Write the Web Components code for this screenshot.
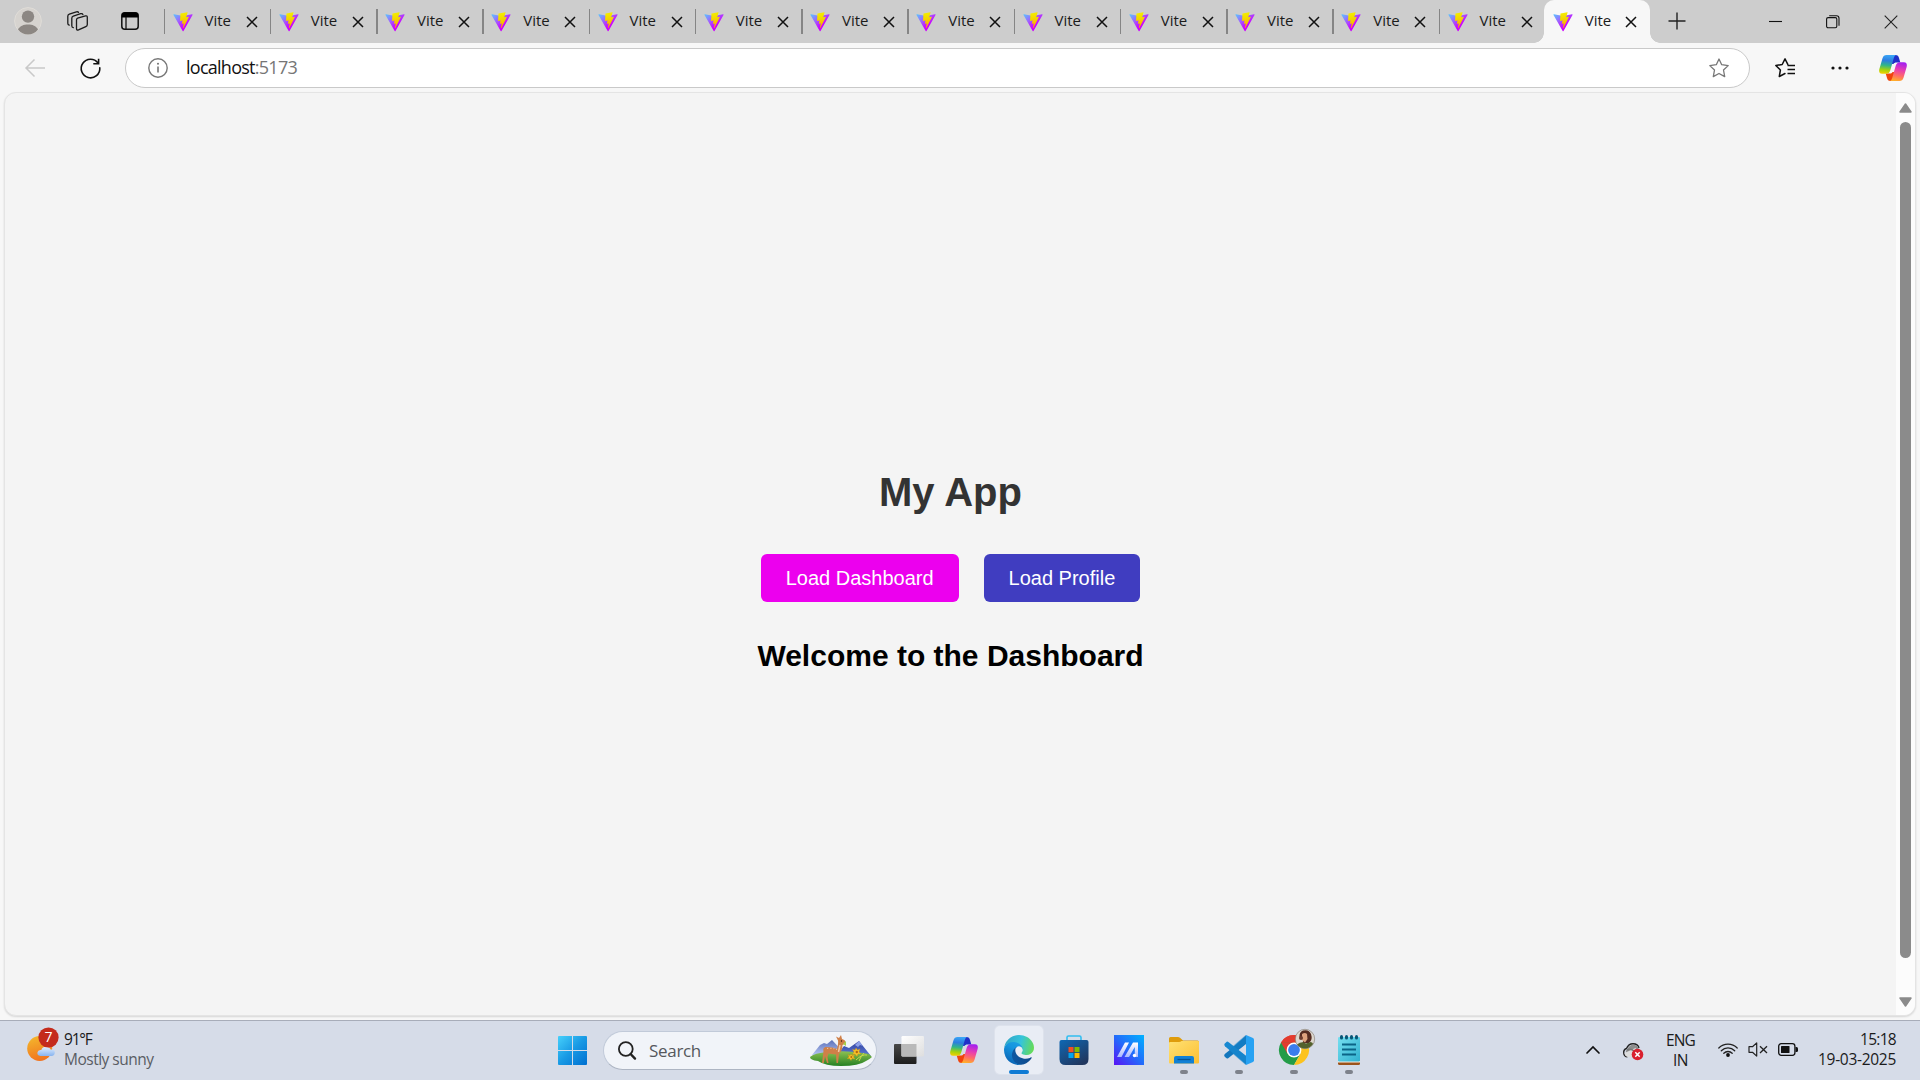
<!DOCTYPE html>
<html lang="en">
<head>
<meta charset="utf-8">
<title>Vite</title>
<style>
html,body{margin:0;width:1920px;height:1080px;overflow:hidden;background:#f7f7f7;font-family:"Open Sans","Noto Sans",sans-serif}
</style>
</head>
<body>
<desktop-screen></desktop-screen>
<script>
const ICONS={
person:[28,28,`<circle cx="14" cy="14" r="13.4" fill="#d6d3cf" stroke="#e0ddd8"/><circle cx="14" cy="9.6" r="6.2" fill="#8c8783"/><path d="M4 22.5C6 18.7 9.500 17.400 14 17.400S22 18.700 24 22.500C21.500 26 18 27.400 14 27.400S6.500 26 4 22.500Z" fill="#8c8783"/>`],
workspaces:[22,20,`<g fill="none" stroke="#1b1b1b" stroke-width="1.3" stroke-linejoin="round" stroke-linecap="round"><path d="M10.600 7.200 18.500 4.900Q20.300 4.500 20.300 6.200V13.400Q20.300 15 18.800 15.600L11.500 18.900Q9.500 19.500 9.500 17.500V9Q9.500 7.600 10.600 7.200Z"/><path d="M6.300 16.700Q4.800 16.500 4.800 14.800V7.300Q4.800 5.700 6.300 5.200L13.700 2.700Q15.500 2.300 15.900 3.600"/><path d="M2.200 14.200Q.800 13.800.800 12.300V5.200Q.800 3.700 2.300 3.200L9.400.900Q11 .500 11.500 1.400"/></g>`],
tabactions:[18,18,`<rect x=".8" y=".8" width="16.400" height="16.400" rx="3" fill="none" stroke="#111" stroke-width="1.500"/><path d="M.8 5.500V3Q.8.500 3 .5H15Q17.200.500 17.200 3V5.500Z" fill="#000"/><path d="M5 5V17" stroke="#111" stroke-width="1.300"/>`],
vite:[20,20,`<svg viewBox="0 0 410 404" width="20" height="20"><defs><linearGradient id="a" x1="6" y1="33" x2="225" y2="300" gradientUnits="userSpaceOnUse"><stop stop-color="#55ccff"/><stop offset=".55" stop-color="#a060ff"/><stop offset="1" stop-color="#cc00fe"/></linearGradient><linearGradient id="b" x1="194" y1="9" x2="236" y2="293" gradientUnits="userSpaceOnUse"><stop stop-color="#f4ee00"/><stop offset=".4" stop-color="#f3d900"/><stop offset="1" stop-color="#ffa800"/></linearGradient></defs><path d="M399.641 59.525 215.643 388.545C211.844 395.338 202.084 395.378 198.228 388.618L10.582 59.556C6.381 52.190 12.680 43.267 21.028 44.759L205.223 77.682C206.398 77.892 207.601 77.890 208.776 77.676L389.119 44.806C397.439 43.289 403.768 52.143 399.641 59.525Z" fill="url(#a)"/><path d="M292.965 1.574 156.801 28.255C154.563 28.694 152.906 30.590 152.771 32.866L144.395 174.330C144.198 177.662 147.258 180.248 150.510 179.498L188.420 170.749C191.967 169.931 195.172 173.055 194.443 176.622L183.180 231.775C182.422 235.487 185.907 238.661 189.532 237.560L212.947 230.446C216.577 229.344 220.065 232.527 219.297 236.242L201.398 322.875C200.278 328.294 207.486 331.249 210.492 326.603L212.500 323.500 323.454 102.072C325.312 98.365 322.108 94.137 318.036 94.923L279.014 102.454C275.347 103.161 272.227 99.746 273.262 96.158L298.731 7.867C299.767 4.273 296.636.855 292.965 1.574Z" fill="url(#b)"/></svg>`],
close:[12,12,`<path d="M1 1 11 11M11 1 1 11" stroke="#111" stroke-width="1.500"/>`],
plus:[18,18,`<path d="M9 .5V17.500M.5 9H17.500" stroke="#222" stroke-width="1.400"/>`],
min:[13,13,`<path d="M0 6.500H13" stroke="#111" stroke-width="1.100"/>`],
max:[14,14,`<rect x=".6" y="2.600" width="10.200" height="10.200" rx="1.500" fill="none" stroke="#111" stroke-width="1.100"/><path d="M3.200.700H10.500Q13 .700 13 3.200V10.700" fill="none" stroke="#111" stroke-width="1.100"/>`],
winclose:[14,14,`<path d="M.7.700 13.300 13.300M13.300.700.700 13.300" stroke="#222" stroke-width="1.100"/>`],
back:[20,18,`<path d="M20 9H1.200M9.500.500 1 9 9.500 17.500" fill="none" stroke="#c9c9c9" stroke-width="1.500"/>`],
reload:[21,21,`<path d="M18 5A9.300 9.300 0 1 0 19.800 9.800" fill="none" stroke="#111" stroke-width="1.600" stroke-linecap="round"/><path d="M18.600.700V5.800H13.300" fill="none" stroke="#111" stroke-width="1.600"/>`],
info:[20,20,`<circle cx="10" cy="10" r="9.200" fill="none" stroke="#777" stroke-width="1.400"/><path d="M10 8.500V14.500" stroke="#777" stroke-width="1.600"/><circle cx="10" cy="5.800" r="1.050" fill="#777"/>`],
star:[20,20,`<path d="M10 1 12.700 6.700 19.200 7.600 14.500 12 15.700 18.600 10 15.500 4.300 18.600 5.500 12 .8 7.600 7.300 6.700Z" fill="none" stroke="#777" stroke-width="1.300" stroke-linejoin="round"/>`],
favs:[20,20,`<path d="M12.800 6.400 10 .9 7.200 6.500.8 7.500 5.400 12 4.300 18.500 10 15.500" fill="none" stroke="#111" stroke-width="1.500" stroke-linejoin="round" stroke-linecap="round"/><path d="M12.500 7.600H20M12.500 11.500H20M12.500 15.400H20" stroke="#111" stroke-width="1.500"/>`],
dots:[18,4,`<g fill="#111"><circle cx="2" cy="2" r="1.600"/><circle cx="9" cy="2" r="1.600"/><circle cx="16" cy="2" r="1.600"/></g>`],
copilot:[28,26,`<defs><linearGradient id="l" x1=".5" y1="0" x2=".4" y2="1"><stop stop-color="#3aa6f6"/><stop offset=".3" stop-color="#2c7de0"/><stop offset=".55" stop-color="#2fb58a"/><stop offset=".8" stop-color="#a5d20c"/><stop offset="1" stop-color="#f0d000"/></linearGradient><linearGradient id="r" x1=".6" y1="0" x2=".4" y2="1"><stop stop-color="#a31ff0"/><stop offset=".4" stop-color="#e83fb0"/><stop offset=".7" stop-color="#ff6a6a"/><stop offset="1" stop-color="#ffae2a"/></linearGradient></defs><path d="M13 0H16.500C18.600 0 19.500 1.200 20 3L21.300 7.500H17.500C16 7.500 15 8 14.500 9L12 9Z" fill="#2030c8"/><path d="M15 26H11.500C9.400 26 8.500 24.800 8 23L6.700 18.500H10.500C12 18.500 13 18 13.500 17L16 17Z" fill="#f0440c"/><path d="M7.500 0H17.500C15.900.300 15.300 1.400 14.800 3L11.300 15.200C10.600 17.600 9.300 18.800 7 18.800H3.200C.6 18.800-.4 16.800.3 14.300L3.500 3.200C4.200 1 5.500 0 7.500 0Z" fill="url(#l)"/><path d="M20.500 26H10.500C12.100 25.700 12.700 24.600 13.200 23L16.700 10.800C17.400 8.400 18.700 7.200 21 7.200H24.800C27.400 7.200 28.400 9.200 27.700 11.700L24.500 22.800C23.800 25 22.500 26 20.500 26Z" fill="url(#r)"/>`],
up:[13,10,`<path d="M6.500 1 12 9H1Z" fill="#8b8b8b" stroke="#8b8b8b" stroke-width="1.500" stroke-linejoin="round"/>`],
down:[13,10,`<path d="M6.500 9 12 1H1Z" fill="#8b8b8b" stroke="#8b8b8b" stroke-width="1.500" stroke-linejoin="round"/>`],
weather:[32,35,`<defs><linearGradient id="s" x1=".3" y1="0" x2=".6" y2="1"><stop stop-color="#f3b62c"/><stop offset="1" stop-color="#f1711e"/></linearGradient><linearGradient id="c" x2="0" y2="1"><stop stop-color="#e2efff"/><stop offset="1" stop-color="#88b4ef"/></linearGradient></defs><circle cx="12.700" cy="21.500" r="12.500" fill="url(#s)"/><path d="M13.500 29Q10 28.500 10.400 25.500Q11 22.500 14.300 23Q15.500 19.500 19.500 19.800Q22.700 20 23.600 22.500Q27.700 22 27.800 25.700Q27.700 28.700 24.500 29Z" fill="url(#c)"/><circle cx="21.500" cy="10.500" r="10.100" fill="#c42b1c"/>`],
start:[29,29,`<defs><linearGradient id="w" x2="29" y2="29" gradientUnits="userSpaceOnUse"><stop stop-color="#46d0fb"/><stop offset=".5" stop-color="#1899e4"/><stop offset="1" stop-color="#006fd0"/></linearGradient></defs><path d="M1 0H14V14H0V1Q0 0 1 0ZM15 0H28Q29 0 29 1V14H15ZM0 15H14V29H1Q0 29 0 28ZM15 15H29V28Q29 29 28 29H15Z" fill="url(#w)"/>`],
search:[18,19,`<circle cx="7.800" cy="8" r="6.900" fill="none" stroke="#222" stroke-width="1.800"/><path d="M12.600 13 17 17.600" stroke="#222" stroke-width="2.400" stroke-linecap="round"/>`],
deer:[62,31,`<defs><linearGradient id="m" x2="0" y2="1"><stop stop-color="#5a6fb8"/><stop offset="1" stop-color="#b4c4f2"/></linearGradient><linearGradient id="n" x2="0" y2="1"><stop stop-color="#2f3f9a"/><stop offset="1" stop-color="#5d7ad8"/></linearGradient><linearGradient id="g" x2="0" y2="1"><stop stop-color="#8cc152"/><stop offset="1" stop-color="#258023"/></linearGradient></defs><path d="M2 20 10 10 14 8 17 9 22 5 36 20Z" fill="url(#m)"/><path d="M27 20 34 11 39 13 49 6 61 21Z" fill="url(#n)"/><path d="M45 10 49 6 53 11 50 10 48 12Z" fill="#8da0e8"/><path d="M0 22Q4 18 18 17Q40 15 59 19L62 22Q60 24 56 26Q49 31 31 31Q15 31 8 26Q0 25 0 22Z" fill="url(#g)"/><path d="M27 14Q28.500 8 28 5.500L26 1.500 29 3 31 0 32 4Q36 5 35.500 8Q33 10 32.500 10Q32.500 16 29 19L28 28H26.500L26 19.500Q21 19 18.500 18.500L17.500 22 18.500 28H17L15 21 13.800 28H12L13.500 16Q12.500 13 15.500 12Q23 12 27 14Z" fill="#cf8048"/><path d="M17 13.500Q23 13 27 14.500" stroke="#f3c195" stroke-width="1.200" stroke-dasharray="1 2" fill="none"/><path d="M30 10 28.500 17" stroke="#f0cba8" stroke-width="1.500"/><circle cx="31.500" cy="6" r=".7" fill="#311"/><path d="M33 9 36 6 36 11Z" fill="#a5cf4a"/><g fill="#f6c22b" stroke="#d08a10" stroke-width=".4"><path d="M46 13 47.500 15 50 14 49 17 51 19 48 19 47 21.500 45 19 42.500 19.500 44 17 42.500 14.500 45 15Z"/><path d="M41 19 42 20.500 44.500 20 43.500 22 45 24 42 23.500 41 25.500 39.500 23.500 37 23.500 39 22 38 19.500 40 20.500Z"/></g><circle cx="46.800" cy="17" r="1.200" fill="#b8690c"/><circle cx="41.300" cy="22" r="1" fill="#b8690c"/><path d="M46 25Q52 19 57 20M49 26Q51 21 54 18" stroke="#c8d94a" fill="none"/>`],
taskview:[30,28,`<defs><linearGradient id="k" x2="0" y2="1"><stop stop-color="#484848"/><stop offset="1" stop-color="#1d1d1d"/></linearGradient><linearGradient id="q" x2="1" y2="1"><stop stop-color="#fff"/><stop offset="1" stop-color="#dedede"/></linearGradient></defs><rect y="8" width="22.500" height="20" rx="1" fill="url(#k)"/><rect x="7.500" width="22.500" height="20.500" rx="1.200" fill="url(#q)"/><path d="M7.500 8H22.500V20.500H8.500Q7.500 20.500 7.500 19.500Z" fill="#b9b9b9"/>`],
edge:[30,30,`<svg viewBox="0 0 256 256" width="30" height="30"><defs><linearGradient id="e1" x1="58" y1="177" x2="236" y2="177" gradientUnits="userSpaceOnUse"><stop stop-color="#0c59a4"/><stop offset="1" stop-color="#114a8b"/></linearGradient><linearGradient id="e2" x1="130" y1="80" x2="50" y2="230" gradientUnits="userSpaceOnUse"><stop stop-color="#1b9de2"/><stop offset=".3" stop-color="#1595df"/><stop offset="1" stop-color="#0b68b8"/></linearGradient><linearGradient id="e3" x1="20" y1="60" x2="250" y2="120" gradientUnits="userSpaceOnUse"><stop stop-color="#31a8c8"/><stop offset=".5" stop-color="#35c4dc"/><stop offset="1" stop-color="#66dc55"/></linearGradient></defs><path fill="url(#e1)" d="M231 190.500c-3.400 1.800-6.900 3.400-10.500 4.700a101.500 101.500 0 0 1-35.900 6.400c-47.300 0-88.500-32.500-88.500-74.300A31.500 31.500 0 0 1 112.500 100c-42.800 1.800-53.800 46.400-53.800 72.500 0 74 68.100 81.400 82.800 81.400 7.900 0 19.800-2.300 27-4.600l1.300-.4a128.300 128.300 0 0 0 66.600-52.800 4 4 0 0 0-5.400-5.600z"/><path fill="url(#e2)" d="M105.700 241.400a79.200 79.200 0 0 1-22.700-21.300 80.700 80.700 0 0 1 29.500-120c3.200-1.500 8.500-4.100 15.600-4a32.400 32.400 0 0 1 25.700 13 31.900 31.900 0 0 1 6.300 18.700c0-.2 24.500-79.600-80-79.600-43.900 0-80 41.600-80 78.200a130.200 130.200 0 0 0 12.100 56 128 128 0 0 0 156.400 67 75.500 75.500 0 0 1-62.800-8z"/><path fill="url(#e3)" d="M152.300 148.900c-.9 1-3.400 2.500-3.400 5.600 0 2.600 1.700 5.200 4.800 7.300 14.300 10 41.400 8.600 41.500 8.600a59.600 59.600 0 0 0 30.300-8.300 61.400 61.400 0 0 0 30.400-52.900c.3-22.400-8-37.300-11.300-43.900C223.500 23.900 177.700 0 128 0A128 128 0 0 0 0 126.200c.5-36.500 36.800-66 80-66 3.500 0 23.500.3 42 10.100 16.300 8.600 24.900 18.900 30.800 29.200 6.200 10.700 7.300 24.100 7.300 29.500 0 5.300-2.700 13.300-7.800 19.900z"/></svg>`],
store:[30,30,`<defs><linearGradient id="t" x2=".7" y2="1"><stop stop-color="#0f68b4"/><stop offset="1" stop-color="#21375f"/></linearGradient></defs><path d="M8 6V2.500Q8 1 9.500 1H20.500Q22 1 22 2.500V6" fill="none" stroke="#32bdf0" stroke-width="1.600"/><path d="M2.500 5H27.500Q29.500 5 29.500 7V24Q29.500 30 23.500 30H6.500Q.5 30 .5 24V7Q.5 5 2.500 5Z" fill="url(#t)"/><path d="M9.500 12H14.500V17.200H9.500Z" fill="#f25022"/><path d="M15.500 12H20.500V17.200H15.500Z" fill="#7fba00"/><path d="M9.500 18H14.500V23H9.500Z" fill="#00a4ef"/><path d="M15.500 18H20.500V23H15.500Z" fill="#ffb900"/>`],
asus:[30,30,`<defs><linearGradient id="u" x1="0" y1="1" x2="1" y2="0"><stop stop-color="#5a12f4"/><stop offset=".5" stop-color="#226cfb"/><stop offset="1" stop-color="#00b2ff"/></linearGradient><linearGradient id="v" x2="0" y2="1"><stop stop-color="#fff"/><stop offset="1" stop-color="#a9b8ff"/></linearGradient></defs><rect width="30" height="30" fill="url(#u)"/><path d="M11 7.500H15L7.500 22H3ZM19 7.500H24V22H20.800V12L15 22H10.500Z" fill="url(#v)"/><circle cx="20.500" cy="20.500" r="1.700" fill="#fff"/>`],
folder:[30,27,`<defs><linearGradient id="f" x2="1" y2="1"><stop stop-color="#ffe173"/><stop offset="1" stop-color="#fcbf32"/></linearGradient></defs><path d="M0 8V1.500Q0 0 1.500 0H9Q10 0 11 .8L14 3.500H28.500Q30 3.500 30 5V8Z" fill="#df9c0c"/><path d="M0 6Q0 5 1 5H10Q11.500 5 12.500 4H29Q30 4 30 5V25.500Q30 26.500 29 26.500H1Q0 26.500 0 25.500Z" fill="url(#f)"/><path d="M5 26.500V21Q5 19 7 19H23Q25 19 25 21V26.500Z" fill="#1180d5"/><path d="M8.500 22.500H21.500" stroke="#075493" stroke-width="1.300"/>`],
vscode:[30,30,`<path d="M22 .5 5.800 15 1.700 18.200Q.8 19 .2 20Q0 21 1 22L2.600 23.300Q3.300 23.800 4.200 23.200L22 9Z" fill="#1276bd"/><path d="M22 29.500 1 11.300Q-.3 10 .6 8.800L2.700 6.800Q3.500 6.300 4.400 7L22 20.800Z" fill="#1788d1"/><path d="M22 0 29 3Q30 3.500 30 4.800V25.200Q30 26.500 29 27L22 30Z" fill="#27a2f3"/><path d="M22 0V8.500L14 15 22 21.200V30Q21.500 30 20.800 29.200L9.500 19.500 5.500 15 9.500 10.500 20.800.800Q21.500 0 22 0Z" fill="#1482c9" fill-opacity=".55"/>`],
chrome:[38,30,`<g transform="translate(4 0)"><path d="M15 15 2 7.500A15 15 0 0 1 28 7.500Z" fill="#e33b2e"/><path d="M2 7.500A15 15 0 0 0 15 30L21.500 18.700 15 15Z" fill="#249c48"/><path d="M28 7.500A15 15 0 0 1 15 30L21.500 18.700 15 7.500Z" fill="#fcc31e"/><path d="M2 7.500 8.500 18.700 15 15V7.500Z" fill="#249c48"/><path d="M2 7.500H28A15 15 0 0 0 2 7.500Z" fill="#e33b2e"/><path d="M2 7.500 8.500 18.700 15 7.500Z" fill="#e33b2e"/><circle cx="15" cy="15" r="7.400" fill="#fff"/><circle cx="15" cy="15" r="5.900" fill="#3b7ded"/></g>`],
avatar:[20,20,`<circle cx="10" cy="10" r="9.700" fill="#ddd7ce" stroke="#8a8379" stroke-width=".7"/><path d="M4.500 8Q4 3 8 1.500Q14 0 16 5Q18 11 14 14H7.500L9 10Z" fill="#542b20"/><path d="M7 5Q10 3 12 5L12.500 10 10 13.500 7 11Z" fill="#dda17d"/><path d="M2 15.500Q5 13 8 13.200L11 14.500 15.500 13Q18 13.700 18 15A9.700 9.700 0 0 1 2 15.500Z" fill="#53612d"/><circle cx="6" cy="9" r="2" fill="#6b392b"/>`],
notepad:[22,30,`<defs><linearGradient id="p" x2="1" y2="1"><stop stop-color="#76dff0"/><stop offset="1" stop-color="#2fb0cf"/></linearGradient></defs><path d="M0 25H22V28.500Q22 30 20.500 30H1.500Q0 30 0 28.500Z" fill="#9b531b"/><path d="M0 25H22V27.500H0Z" fill="#f5f0e8"/><rect y="2" width="22" height="24.500" rx="1.200" fill="url(#p)"/><g fill="#075575"><rect x="2" width="3" height="4.500" rx="1.500"/><rect x="7" width="3" height="4.500" rx="1.500"/><rect x="12" width="3" height="4.500" rx="1.500"/><rect x="17" width="3" height="4.500" rx="1.500"/></g><path d="M4 9.500H18M4 14.500H18M4 19.500H18" stroke="#0b6487" stroke-width="1.800"/>`],
chev:[14,9,`<path d="M1 8 7 2 13 8" fill="none" stroke="#111" stroke-width="1.700" stroke-linecap="round"/>`],
onedrive:[21,18,`<path d="M4.500 13.800A4.300 4.300 0 0 1 3.500 5.500Q5.500.800 10 .8Q15 .8 16 5" fill="none" stroke="#222" stroke-width="1.400"/><path d="M4 6.500Q7 .8 12 2Q15.500 3 15.500 6L5 11.500Q1.200 9 4 6.500Z" fill="#8d8d8d"/><path d="M1.500 10 13 4.800 10 14H5Q1.500 13.500 1.500 10Z" fill="#ddd"/><path d="M4 7Q8 5 11 8" stroke="#777" fill="none" stroke-width="1.400"/><circle cx="14.500" cy="11.500" r="5.800" fill="#d9202e"/><path d="M12.300 9.300 16.700 13.700M16.700 9.300 12.300 13.700" stroke="#fff" stroke-width="1.500"/>`],
wifi:[20,15,`<g fill="none" stroke="#222" stroke-width="1.300" stroke-linecap="round"><path d="M.8 6A13 13 0 0 1 19.200 6"/><path d="M3.300 8.700A9.500 9.500 0 0 1 16.700 8.700"/><path d="M5.800 11.200A6 6 0 0 1 14.200 11.200"/></g><circle cx="10" cy="13" r="1.900" fill="#111"/>`],
mute:[20,15,`<path d="M1 4.700H4.500L8.700.900V14.100L4.500 10.300H1Z" fill="none" stroke="#222" stroke-width="1.200" stroke-linejoin="round"/><path d="M12 4.300 19 11M19 4.300 12 11" stroke="#222" stroke-width="1.300"/>`],
battery:[20,13,`<rect x=".7" y=".7" width="16.200" height="11.600" rx="2.500" fill="none" stroke="#111" stroke-width="1.300"/><rect x="3" y="3" width="8.500" height="7" rx=".6" fill="#111"/><path d="M17.500 4H18.500Q20 4 20 5.500V7.500Q20 9 18.500 9H17.500Z" fill="#111"/>`]
};
const make=(tag,html)=>customElements.define(tag,class extends HTMLElement{
  constructor(){super();const t=document.createElement('template');t.innerHTML=html;this.attachShadow({mode:'open'}).append(t.content.cloneNode(true));}
});
customElements.define('ui-icon',class extends HTMLElement{
  connectedCallback(){
    if(this.shadowRoot)return;
    const [w,h,body]=ICONS[this.getAttribute('name')];
    this.attachShadow({mode:'open'}).innerHTML=`<style>:host{display:block;flex:none;width:${w}px;height:${h}px}svg{display:block;overflow:visible}</style><svg width="${w}" height="${h}" viewBox="0 0 ${w} ${h}" aria-hidden="true">${body}</svg>`;
  }
});
/* One-line label whose tracking is adjusted so that it spans the given width. */
customElements.define('fit-text',class extends HTMLElement{
  connectedCallback(){
    if(this.shadowRoot)return;
    this.attachShadow({mode:'open'}).innerHTML='<style>:host{display:block;flex:none;white-space:nowrap}span{display:inline-block}</style><span><slot></slot></span>';
    const s=this.shadowRoot.querySelector('span'),w=+this.getAttribute('w');
    requestAnimationFrame(()=>{const n=this.textContent.length,d=(w-s.getBoundingClientRect().width)/n;s.style.letterSpacing=d.toFixed(3)+'px';});
  }
});
make('browser-tab',`<style>
:host{display:flex;align-items:flex-start;box-sizing:border-box;width:106.250px;height:43px;flex:none;padding:12px 0 0 9px;position:relative;font-size:15px;line-height:20px;color:#1b1b1b}
:host::before{content:"";position:absolute;left:0;top:9px;width:1.500px;height:25px;background:#858585}
:host([active]){background:#f7f7f7;border-radius:10px 10px 0 0;width:106px;margin-left:-.5px;padding-left:8.500px}
:host([active])::before{left:-10px;top:33px;width:10px;height:10px;background:radial-gradient(circle at 0 0,transparent 9.500px,#f7f7f7 10px)}
:host([active])::after{content:"";position:absolute;right:-10px;top:33px;width:10px;height:10px;background:radial-gradient(circle at 100% 0,transparent 9.500px,#f7f7f7 10px)}
fit-text{margin:-2px 0 0 12px;width:26px}ui-icon[name=close]{margin:4px 0 0 15px}
:host([active]) ui-icon[name=close]{margin-left:14px}
</style><ui-icon name="vite"></ui-icon><fit-text w="26"><slot></slot></fit-text><ui-icon name="close"></ui-icon>`);
customElements.define('tab-strip',class extends HTMLElement{
  constructor(){super();this.attachShadow({mode:'open'}).innerHTML=`<style>
:host{display:flex;height:43px;background:#cdcdcd}
.tools{display:flex;box-sizing:border-box;width:163.500px;padding:7px 0 0 14px}
.tools ui-icon:nth-child(2){margin:4px 0 0 25px}.tools ui-icon:nth-child(3){margin:5px 0 0 32px}
.plus{margin:12px 0 0 18px}.win{display:flex;margin-left:auto;padding:15px 22px 0 0;gap:44px}
</style><div class="tools"><ui-icon name="person"></ui-icon><ui-icon name="workspaces"></ui-icon><ui-icon name="tabactions"></ui-icon></div>
${'<browser-tab>Vite</browser-tab>'.repeat(13)}<browser-tab active>Vite</browser-tab><ui-icon class="plus" name="plus"></ui-icon>
<div class="win"><ui-icon name="min"></ui-icon><ui-icon name="max"></ui-icon><ui-icon name="winclose"></ui-icon></div>`;}
});
make('address-bar',`<style>
:host{display:flex;height:49px;box-sizing:border-box;padding:5px 13px 4px 25px;align-items:center}
.reload{margin-left:34.500px}
.field{display:flex;align-items:center;box-sizing:border-box;width:1625px;height:40px;margin-left:24.500px;padding:0 20px 0 22px;border:1px solid #c9c9c9;border-radius:20px;background:#fff;font-size:18px;line-height:24px;color:#111}
.field fit-text{margin:-2px 0 0 18px}.port{color:#767676}.star{margin-left:auto}
.favs{margin-left:25px}.dots{margin-left:36px}.cop{margin-left:30px}
</style><ui-icon name="back"></ui-icon><ui-icon class="reload" name="reload"></ui-icon>
<div class="field"><ui-icon name="info"></ui-icon><fit-text w="111">localhost<span class="port">:5173</span></fit-text><ui-icon class="star" name="star"></ui-icon></div>
<ui-icon class="favs" name="favs"></ui-icon><ui-icon class="dots" name="dots"></ui-icon><ui-icon class="cop" name="copilot"></ui-icon>`);
make('scroll-bar',`<style>
:host{display:flex;flex-direction:column;align-items:center;box-sizing:border-box;width:19px;background:#fcfcfc;padding:10px 0 8px}
i{flex:1;width:11px;border-radius:6px;background:#8b8b8b;margin:9px 0 39px}
</style><ui-icon name="up"></ui-icon><i></i><ui-icon name="down"></ui-icon>`);
make('app-button',`<style>
button{display:block;font:20px/24px "Liberation Sans",Arial,sans-serif;color:#fff;border:0;border-radius:6px;padding:12px 25px;height:48px;margin:0;background:var(--bg)}
</style><button><slot></slot></button>`);
make('my-app',`<style>
:host{display:flex;flex-direction:column;align-items:center;flex:1;font-family:"Liberation Sans",Arial,sans-serif;padding-top:376px}
h1{font-size:40px;line-height:46px;color:#333;margin:0}
div{display:flex;gap:25px;margin-top:39px}
h2{font-size:30px;line-height:34px;color:#000;margin:37px 0 0}
</style><h1>My App</h1><div><app-button style="--bg:#ec00ee">Load Dashboard</app-button><app-button style="--bg:#403dc0">Load Profile</app-button></div><h2>Welcome to the Dashboard</h2>`);
make('page-view',`<style>
:host{display:flex;box-sizing:border-box;height:924px;margin:0 4px;border:1px solid #e4e4e4;border-radius:12px;background:#f4f4f4;overflow:hidden;box-shadow:0 1px 2px #0002}
</style><my-app></my-app><scroll-bar></scroll-bar>`);
make('task-item',`<style>
:host{display:flex;align-items:center;justify-content:center;box-sizing:border-box;width:48px;height:48px;margin:0 3.500px;position:relative;border-radius:5px}
:host([active]){background:#e9edf5;box-shadow:0 0 0 1px #dde2ec}
:host([running])::after,:host([active])::after{content:"";position:absolute;bottom:0;left:20px;width:8px;height:4px;border-radius:2px;background:#7e828b}
:host([active])::after{left:14px;width:20px;background:#0f7bd4}
</style><slot></slot>`);
make('task-bar',`<style>
:host{display:flex;box-sizing:border-box;height:60px;border-top:1px solid #a8adb9;background:#d6dce8;color:#1b1b1b;font-size:15.500px;line-height:20px}
.weather{display:flex;width:531px;padding:6px 0 0 27px;position:relative}.weather>div{margin:2px 0 0 5px}
.grey{color:#5a5d63}.badge{position:absolute;left:44.500px;top:6px;color:#fff;font-size:14px}
.start{margin:15px 0 0 0}
.search{display:flex;align-items:center;box-sizing:border-box;width:274px;height:39px;margin:10px 4.500px 0 16px;padding:0 4px 0 14px;border:1px solid #c1cad9;border-bottom-color:#adb5c3;border-radius:20px;background:#f1f4f9;color:#55585d;font-size:17px}
.search fit-text{margin:0 0 0 13px}.search .deer{margin-left:auto}
.apps{display:flex;padding-top:5px}
.avatar{position:absolute;left:25px;top:3px}
.tray{display:flex;flex:1;justify-content:flex-end;padding-right:24px}
.lang{display:flex;flex-direction:column;align-items:center;margin:9px 23px 0 22px}
.clock{display:flex;flex-direction:column;align-items:flex-end;margin:8px 0 0 20px}
</style>
<div class="weather"><ui-icon name="weather"></ui-icon><span class="badge">7</span><div><fit-text w="27.500">91°F</fit-text><fit-text class="grey" w="89.500">Mostly sunny</fit-text></div></div>
<ui-icon class="start" name="start"></ui-icon>
<div class="search"><ui-icon name="search"></ui-icon><fit-text w="52">Search</fit-text><ui-icon class="deer" name="deer"></ui-icon></div>
<div class="apps"><task-item><ui-icon name="taskview"></ui-icon></task-item><task-item><ui-icon name="copilot"></ui-icon></task-item><task-item active><ui-icon name="edge"></ui-icon></task-item><task-item><ui-icon name="store"></ui-icon></task-item><task-item><ui-icon name="asus"></ui-icon></task-item><task-item running><ui-icon name="folder"></ui-icon></task-item><task-item running><ui-icon name="vscode"></ui-icon></task-item><task-item running><ui-icon name="chrome"></ui-icon><ui-icon class="avatar" name="avatar"></ui-icon></task-item><task-item running><ui-icon name="notepad"></ui-icon></task-item></div>
<div class="tray"><ui-icon name="chev" style="margin:24px 23px 0 0"></ui-icon><ui-icon name="onedrive" style="margin-top:22px"></ui-icon>
<div class="lang"><fit-text w="29">ENG</fit-text><fit-text w="15">IN</fit-text></div>
<ui-icon name="wifi" style="margin:21px 10px 0 0"></ui-icon><ui-icon name="mute" style="margin:21px 10px 0 0"></ui-icon><ui-icon name="battery" style="margin-top:22px"></ui-icon>
<div class="clock"><fit-text w="36">15:18</fit-text><fit-text w="78">19-03-2025</fit-text></div></div>`);
make('desktop-screen',`<style>:host{display:flex;flex-direction:column;width:1920px;height:1080px;background:#f7f7f7}task-bar{margin-top:auto}</style><tab-strip></tab-strip><address-bar></address-bar><page-view></page-view><task-bar></task-bar>`);
</script>
</body>
</html>
